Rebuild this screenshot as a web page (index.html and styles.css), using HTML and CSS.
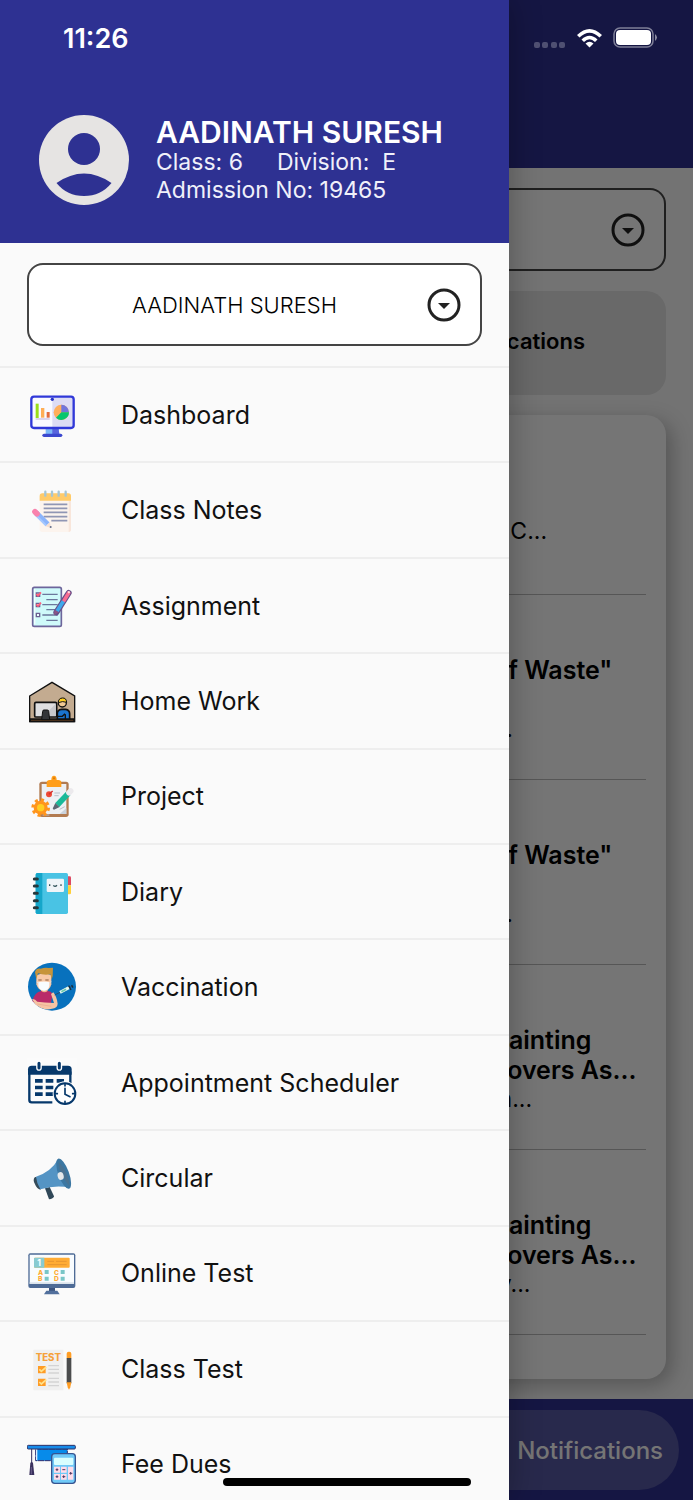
FILE: index.html
```html
<!DOCTYPE html>
<html lang="en">
<head>
<meta charset="utf-8">
<meta name="viewport" content="width=device-width, initial-scale=1">
<title>Student App</title>
<link rel="stylesheet" href="styles.css">
</head>
<body>
<div class="statusbar">
	<span class="clock">11:26</span>
	<div class="indicators">
		<svg class="signal" viewBox="0 0 32 6"><rect width="6" height="6" rx="2"/><rect x="8" width="6" height="6" rx="2"/><rect x="17" width="6" height="6" rx="2"/><rect x="25" width="6" height="6" rx="2"/></svg>
		<svg class="wifi" viewBox="0 0 27 20"><path d="M1 7Q13.500-5 26 7L23.500 9.500Q13.500 0 3.500 9.500ZM5.500 11.500Q13.500 4 21.500 11.500L19 14Q13.500 8.500 8 14ZM9.500 15.500Q13.500 12 17.500 15.500L13.500 19.500Z"/></svg>
		<svg class="battery" viewBox="0 0 45 22"><rect x="1" y="1" width="39" height="19" rx="6" fill="none" stroke="#fff" stroke-opacity=".45" stroke-width="1.500"/><rect x="3" y="3" width="35" height="15" rx="4" fill="#fff"/><path d="M42 7q4 3.500 0 7z" fill="#fff" fill-opacity=".5"/></svg>
	</div>
</div>

<nav class="drawer">
	<header class="profile">
		<svg class="avatar" viewBox="0 0 90 90"><circle cx="45" cy="45" r="45" fill="#e6e4e3"/><circle cx="45" cy="34" r="16" fill="#2e3192"/><path d="M17.500 68Q45 49 72.500 68Q62 81 45 81T17.500 68Z" fill="#2e3192"/></svg>
		<div>
			<h1>AADINATH SURESH</h1>
			<p class="class"><span>Class: 6</span><span>Division:&nbsp; E</span></p>
			<p>Admission No: 19465</p>
		</div>
	</header>
	<div class="picker">
		<select aria-label="Student"><option>AADINATH SURESH</option></select>
		<svg class="arrow" viewBox="0 0 34 34"><circle cx="17" cy="17" r="15"/><path d="M11 15h12l-6 6z"/></svg>
	</div>
	<ul class="menu">
		<li><a href="#dashboard">
			<svg viewBox="0 0 150 150"><path d="M56 115h40v20H56z" fill="#7cb8f8"/><path d="M76 115h18l4 20H76z" fill="#5964dc"/><rect x="46" y="131" width="60" height="10" rx="5" fill="#3b48cf"/><rect x="13" y="20" width="127" height="94" rx="6" fill="#fafaff"/><path d="M76 20h64v94H76z" fill="#dddcf4"/><rect x="13" y="20" width="127" height="94" rx="8" fill="none" stroke="#3038d8" stroke-width="7"/><circle cx="76" cy="28" r="5" fill="#2330c4"/><path d="M26 41h9v43h-9z" fill="#9bdd19"/><path d="M42 54h10v29H42z" fill="#ffae57"/><path d="M59 66h9v17h-9z" fill="#e36c3d"/><path d="M26 84h42v6H26z" fill="#dcd5ed"/><circle cx="103" cy="67" r="23" fill="#ffae5b"/><path d="M103 67V44a23 23 0 0 1 23 23z" fill="#7176dc"/><path d="M103 67h23a23 23 0 0 1-39 16z" fill="#05c66e"/></svg>
			Dashboard</a></li>
		<li><a href="#class-notes">
			<svg viewBox="0 0 150 150"><rect x="38" y="25" width="94" height="116" rx="8" fill="#fcf4ee"/><path d="M125 47h7v86q0 8-7 8z" fill="#f8e6db"/><path d="M38 47V33q0-8 8-8h78q8 0 8 8v14z" fill="#ffcb69"/><path d="M55 20v12M75 20v12M95 20v12M116 20v12" stroke="#a6c6d4" stroke-width="7" stroke-linecap="round"/><path d="M50 58h71M50 70h71M50 82h71M50 95h71M73 107h48" stroke="#9096b4" stroke-width="5"/><path d="M26 82l36 36" stroke="#8bb4fb" stroke-width="16"/><path d="M22 86l36 36" stroke="#a5c8ff" stroke-width="6"/><path d="M24 80l6 6" stroke="#f982ad" stroke-width="17" stroke-linecap="round"/><path d="M68 112l5 17-17-5z" fill="#f6dfd0"/><circle cx="71" cy="126" r="3" fill="#65718e"/></svg>
			Class Notes</a></li>
		<li><a href="#assignment">
			<svg viewBox="0 0 150 150"><rect x="17" y="19" width="86" height="117" rx="5" fill="#cffafa" stroke="#6d659b" stroke-width="5"/><path d="M23 24v106" stroke="#f1ffff" stroke-width="4"/><path d="M46 40h46M58 56h34M46 71h46M58 86h34M46 102h46M58 118h34" stroke="#6b779c" stroke-width="4"/><path d="M28 36h10v10H28zM28 67h10v10H28zM28 97h10v10H28z" fill="#e9ffff" stroke="#6b5e91" stroke-width="4"/><path d="M28 39l5 5 9-10M28 70l5 5 9-10" fill="none" stroke="#ff5d7b" stroke-width="5"/><path d="M125 36L88 94" stroke="#654f88" stroke-width="18" stroke-linecap="round"/><path d="M125 36l-14 23" stroke="#f96c91" stroke-width="11" stroke-linecap="round"/><path d="M109 61L90 91" stroke="#3ea9ec" stroke-width="11"/><path d="M83 86l12 8-14 9z" fill="#8a5585"/><path d="M123 35l5-3" stroke="#ffdce1" stroke-width="6"/></svg>
			Assignment</a></li>
		<li><a href="#home-work">
			<svg viewBox="0 0 150 150"><path d="M8 60L75 19l68 41v77H8z" fill="#c3ab90" stroke="#111" stroke-width="4"/><path d="M10 129h131v8H10z" fill="#49301b" stroke="#111" stroke-width="4"/><rect x="23" y="79" width="66" height="44" rx="4" fill="#dfdfe1" stroke="#111" stroke-width="5"/><path d="M86 83v37H50z" fill="#c8c8cb"/><path d="M47 106q0-4 4-4h10q4 0 4 4l3 25H44z" fill="#333538" stroke="#111" stroke-width="3"/><circle cx="106" cy="81" r="12" fill="#f1c994" stroke="#111" stroke-width="4"/><path d="M94 80q0-13 12-14t13 13q-12-5-25 1z" fill="#ffcf21" stroke="#111" stroke-width="3"/><path d="M91 129v-17q0-11 13-12h12q12 2 12 13v16z" fill="#1a74cf" stroke="#111" stroke-width="5"/><path d="M88 121h18l8-8M115 129v-14" fill="none" stroke="#111" stroke-width="4"/></svg>
			Home Work</a></li>
		<li><a href="#project">
			<svg viewBox="0 0 150 150"><rect x="37" y="32" width="88" height="106" rx="8" fill="#b27b51"/><path d="M44 39h74v90H44z" fill="#edf0f4"/><path d="M118 111v18h-20z" fill="#cbd2db"/><path d="M59 48V35q0-7 9-8h5q0-13 8-13t8 13h5q9 1 9 8v13z" fill="#ff9e1b"/><circle cx="81" cy="22" r="3" fill="#d97a09"/><circle cx="66" cy="70" r="9" fill="#ed4935"/><path d="M66 70l11-10" stroke="#d52e2d" stroke-width="4"/><path d="M82 66h17M82 74h13M47 132h20M98 115l15-8" stroke="#b9bec8" stroke-width="3"/><path d="M91 102l33-35" stroke="#19b999" stroke-width="17"/><path d="M126 65l5-5" stroke="#eceaed" stroke-width="17" stroke-linecap="round"/><path d="M85 96l13 12-17 8q-6-2-2-7z" fill="#5c6673"/><circle cx="41" cy="110" r="23" fill="none" stroke="#ff951d" stroke-width="10" stroke-dasharray="9 9.060"/><circle cx="41" cy="110" r="21" fill="#ff951d"/><circle cx="41" cy="110" r="11" fill="#ffce22"/></svg>
			Project</a></li>
		<li><a href="#diary">
			<svg viewBox="0 0 150 150"><path d="M121 28h7q4 0 4 4v23h-11z" fill="#dc4962"/><path d="M121 55h11v23q0 4-4 4h-7z" fill="#ffcf38"/><rect x="26" y="18" width="97" height="123" rx="5" fill="#49c3e4"/><path d="M46 18H31q-5 0-5 5v113q0 5 5 5h15z" fill="#15a6ca"/><path d="M22 36h9M22 57h9M22 79h9M22 101h9M22 122h9" stroke="#26383c" stroke-width="9" stroke-linecap="round"/><rect x="59" y="35" width="52" height="40" rx="4" fill="#eff4f8"/><path d="M68 52v5M102 52v5M79 55q5 6 11 0" fill="none" stroke="#35555d" stroke-width="4"/></svg>
			Diary</a></li>
		<li><a href="#vaccination">
			<svg viewBox="0 0 150 150"><circle cx="75" cy="74" r="72" fill="#0871bd"/><path d="M42 78h20v20H42z" fill="#eeb28e"/><path d="M28 40q22-11 45-1v28q-5 20-22 20T28 67z" fill="#f8c9a8"/><path d="M28 52l-4-22q4-12 17-10 14-5 24-2l13-1-1 25-3 10-4-15q-20 3-37-3z" fill="#c6943b"/><path d="M34 61q17-5 33 0v11q-3 14-16 14T34 72z" fill="#f8fcff"/><path d="M34 63l-5-3M67 62l6-3" stroke="#d9edf6" stroke-width="2"/><path d="M34 54h10M55 54h10" stroke="#885b3b" stroke-width="3"/><path d="M16 117q6-26 27-30 9 8 19 0 10 0 15 9l-4 20-2 15-40-1z" fill="#b92b69"/><path d="M72 96l7-5q10 12 13 34-1 14-17 15-26 8-50-13l-10-16q8-2 16 8 20 3 50 4z" fill="#f6c4a4"/><path d="M31 126l42 7" stroke="#e8a78b" stroke-width="2"/><path d="M83 99l52-26" stroke="#303c4b" stroke-width="2"/><path d="M99 91l27-14" stroke="#e8f8ee" stroke-width="9"/><path d="M103 89l14-7" stroke="#6ac7ad" stroke-width="5"/><path d="M125 71l7 13M134 69l4 8" stroke="#192d3a" stroke-width="4"/></svg>
			Vaccination</a></li>
		<li><a href="#appointment">
			<svg viewBox="0 0 150 150"><path d="M0 0h150v150H0z" fill="#fff" fill-opacity=".3"/><path d="M7 44h123v57M76 133H14q-7 0-7-7V44" fill="none" stroke="#06386b" stroke-width="7"/><path d="M3 50V34q0-11 11-11h109q11 0 11 11v16z" fill="#06386b"/><path d="M36 16v14M97 16v14" stroke="#fff" stroke-width="17" stroke-linecap="round"/><path d="M36 16v14M97 16v14" stroke="#06386b" stroke-width="9" stroke-linecap="round"/><path d="M24 63h23v11H24zM56 63h23v11H56zM89 63h22v11H89zM24 83h23v11H24zM56 83h23v11H56zM24 103h23v11H24zM56 103h23v11H56z" fill="#06386b"/><circle cx="114" cy="107" r="37" fill="#fff"/><circle cx="114" cy="107" r="31" fill="#fff" stroke="#06386b" stroke-width="6"/><path d="M114 91v18l15 7M114 77v7M114 130v7M84 107h7M137 107h7" fill="none" stroke="#06386b" stroke-width="5" stroke-linecap="round"/></svg>
			Appointment Scheduler</a></li>
		<li><a href="#circular">
			<svg viewBox="0 0 150 150"><path d="M54 106l14-4 13 28q-2 8-15 9z" fill="#304858"/><path d="M24 72q-8 8 0 22 6 15 16 16l6-8-13-29z" fill="#344b59"/><path d="M27 71Q74 55 94 17l36 88q-41-10-90 4-11-18-13-38z" fill="#5494c4"/><ellipse cx="110" cy="62" rx="16" ry="48" transform="rotate(-20 110 62)" fill="#3c77a2"/><path d="M95 26q31 34 33 75l-16-22-15-31z" fill="#4a7291"/><ellipse cx="101" cy="69" rx="9" ry="12" transform="rotate(-15 101 69)" fill="#e5e8ea"/></svg>
			Circular</a></li>
		<li><a href="#online-test">
			<svg viewBox="0 0 150 150"><path d="M66 119h18v12H66z" fill="#3b547f"/><path d="M58 128h33l7 11H51z" fill="#516f9c"/><rect x="4" y="16" width="141" height="104" rx="6" fill="#4e6b96"/><path d="M8 20h133v87H8z" fill="#f8fcff"/><path d="M8 103h133v5H8z" fill="#dbe4ec"/><rect x="21" y="29" width="107" height="30" rx="3" fill="#ffac35"/><path d="M52 29H24q-3 0-3 3v24q0 3 3 3h28z" fill="#88cbd1"/><path d="M61 40h20M87 40h32M61 50h58" stroke="#e79631" stroke-width="3"/><text class="slide-number" x="31" y="53">1</text><g class="answers"><text x="33" y="80">A</text><text x="33" y="99">B</text><text x="81" y="80">C</text><text x="81" y="99">D</text></g><path d="M53 66h12v12H53zM53 86h12v12H53zM101 66h12v12h-12zM101 86h12v12h-12z" fill="#79c6c8"/></svg>
			Online Test</a></li>
		<li><a href="#class-test">
			<svg viewBox="0 0 150 150"><path d="M19 17h90v122H19z" fill="#f0f0f0"/><text class="test-label" x="26" y="52">TEST</text><path d="M33 66h23v22H33zM33 104h23v22H33z" fill="#ff9c25"/><path d="M37 76l6 6 15-13M37 114l6 6 15-13" fill="none" stroke="#ffe18a" stroke-width="5"/><path d="M64 65h32M64 76h32M64 87h32M64 103h32M64 114h32M64 125h32" stroke="#d3d3d4" stroke-width="4"/><rect x="119" y="23" width="14" height="24" rx="6" fill="#ff9d24"/><path d="M119 42h14v76h-14z" fill="#4b4c4d"/><path d="M119 115h14l-3 15-4 7-4-7z" fill="#ff9d24"/></svg>
			Class Test</a></li>
		<li><a href="#fee-dues">
			<svg viewBox="0 0 150 150"><path d="M26 30h95v35H26z" fill="#078bea" stroke="#312f70" stroke-width="3" stroke-dasharray="18 2"/><path d="M27 30h4v33h-4z" fill="#d7edff"/><rect x="1" y="19" width="144" height="11" rx="3" fill="#168bea" stroke="#303064" stroke-width="3"/><path d="M14 30v46" stroke="#34305f" stroke-width="3"/><path d="M10 72q4-6 8 0l4 36H7z" fill="#3a315d"/><path d="M13 84v22" stroke="#8374a1" stroke-width="2"/><rect x="74" y="44" width="71" height="89" rx="9" fill="#70caf8" stroke="#365491" stroke-width="4"/><rect x="81" y="56" width="58" height="22" rx="3" fill="#d9ffff"/><path d="M81 83h18v18H81zM102 83h17v18h-17zM123 83h16v39h-16zM81 105h18v17H81zM102 105h17v17h-17z" fill="#ffdce9"/><path d="M86 92h8M90 88v8M106 92h9M127 103h9M131 99v8M86 113h8M90 109v8M106 113h9M110 109v8" stroke="#4f3760" stroke-width="3"/></svg>
			Fee Dues</a></li>
	</ul>
</nav>

<main class="app">
	<div class="appbar"></div>
	<div class="content">
		<div class="picker">
			<select aria-label="Current student"><option></option></select>
			<svg class="arrow" viewBox="0 0 34 34"><circle cx="17" cy="17" r="15"/><path d="M11 15h12l-6 6z"/></svg>
		</div>
		<h2 class="heading">Notifications</h2>
		<div class="list">
			<article class="first"><p>NC...</p></article>
			<article><h3>of Waste"</h3><p>...</p></article>
			<article><h3>of Waste"</h3><p>...</p></article>
			<article><h3>Painting<br>Lovers As...</h3><p>in...</p></article>
			<article><h3>Painting<br>Lovers As...</h3><p>ly...</p></article>
		</div>
	</div>
	<footer class="tabbar"><a href="#notifications">Notifications</a></footer>
</main>
<div class="home-indicator"></div>
</body>
</html>
```
FILE: styles.css
```css
*{
	box-sizing:border-box;
}
html,body{
	padding:0;
	margin:0;
}
body{
	display:flex;
	position:relative;
	height:100vh;
	overflow:hidden;
	font-family:"Inter","Liberation Sans",sans-serif;
	font-size:25px;
	color:#111;
}
h1,h2,h3,p,ul{
	margin:0;
	padding:0;
}
a{
	color:inherit;
	text-decoration:none;
}

/* system bars, over everything */
.statusbar{
	position:absolute;
	z-index:3;
	top:0;
	left:0;
	width:100%;
	height:76px;
	padding:0 35px 0 63px;
	display:flex;
	align-items:center;
	justify-content:space-between;
	color:#fff;
}
.clock{
	font-size:27px;
	font-weight:600;
}
.indicators{
	display:flex;
	align-items:center;
	gap:10px;
}
.signal{
	width:32px;
	height:6px;
	margin-top:14px;
	fill:#fff;
	fill-opacity:.25;
}
.wifi{
	width:27px;
	height:20px;
	fill:#fff;
}
.battery{
	width:45px;
	height:22px;
}
.home-indicator{
	position:absolute;
	z-index:3;
	bottom:14px;
	left:50%;
	width:248px;
	height:8px;
	margin-left:-124px;
	border-radius:4px;
	background-color:#000;
}

/* drawer */
.drawer{
	position:relative;
	z-index:2;
	flex:0 0 509px;
	overflow:hidden;
	background-color:#fafafa;
	box-shadow:0 0 30px rgba(0,0,0,0.3);
}
.profile{
	display:flex;
	align-items:center;
	gap:27px;
	height:243px;
	padding:76px 20px 0 39px;
	background-color:#2e3192;
	color:#fff;
}
.avatar{
	width:90px;
	height:90px;
}
.profile h1{
	font-size:30px;
	font-weight:600;
	line-height:32px;
	white-space:nowrap;
}
.profile p{
	font-size:23px;
	line-height:28px;
	color:#f0f0fa;
}
.class{
	display:flex;
	gap:34px;
}
.picker{
	display:grid;
	align-items:center;
	margin:20px 27px;
}
.picker select{
	grid-area:1/1;
	width:100%;
	height:83px;
	padding:0 67px 0 27px;
	appearance:none;
	border:2px solid #444;
	border-radius:16px;
	background-color:#fff;
	color:#000;
	font:inherit;
	font-size:22px;
	font-weight:300;
	text-align:center;
	text-align-last:center;
}
.arrow{
	grid-area:1/1;
	justify-self:end;
	width:34px;
	height:34px;
	margin-right:21px;
	fill:#222;
	pointer-events:none;
}
.arrow circle{
	fill:none;
	stroke:#222;
	stroke-width:3px;
}
.menu{
	display:grid;
	grid-auto-rows:1fr;
	min-height:1145px;
	list-style:none;
}
.menu li{
	border-top:2px solid #eee;
}
.menu a{
	display:flex;
	align-items:center;
	gap:44px;
	height:100%;
	padding-left:27px;
}
.menu svg{
	width:50px;
	height:50px;
}
.slide-number{
	font-size:26px;
	font-weight:700;
	fill:#fff;
}
.answers{
	font-size:20px;
	font-weight:800;
	fill:#ffac35;
}
.test-label{
	font-size:29px;
	font-weight:800;
	fill:#f5a13b;
}

/* page behind the drawer */
.app{
	position:relative;
	flex:1;
	display:flex;
	flex-direction:column;
	margin-left:-80px;
	background-color:#fafafa;
}
.app::after{
	content:"";
	position:absolute;
	top:0;
	right:0;
	bottom:0;
	left:0;
	background-color:rgba(0,0,0,0.54);
}
.appbar{
	flex:0 0 168px;
	background-color:#2e3192;
}
.content{
	flex:1;
	display:flex;
	flex-direction:column;
	gap:20px;
	padding:20px 27px 20px 0;
}
.content .picker{
	margin:0;
}
.content .picker select{
	border-left:none;
	border-radius:0 16px 16px 0;
}
.heading{
	height:104px;
	padding-right:81px;
	border-radius:0 20px 20px 0;
	background-color:#e4e4e4;
	color:#000;
	font-size:22px;
	font-weight:600;
	line-height:100px;
	text-align:right;
}
.list{
	flex:1;
	padding-right:20px;
	border-radius:0 20px 20px 0;
	background-color:#fff;
	box-shadow:6px 6px 20px rgba(0,0,0,0.25);
	color:#000;
}
.list article{
	height:185px;
	padding:60px 0 0 64px;
	border-bottom:1px solid #bbb;
}
.list .first{
	height:180px;
	padding-top:102px;
}
.list h3{
	min-height:60px;
	font-size:25px;
	font-weight:600;
	line-height:30px;
	white-space:nowrap;
}
.list p{
	font-size:23px;
	line-height:28px;
}
.tabbar{
	flex:0 0 101px;
	padding:11px 14px 10px 0;
	background-color:#2e3192;
}
.tabbar a{
	display:flex;
	align-items:center;
	justify-content:flex-end;
	height:80px;
	padding-right:16px;
	border-radius:0 40px 40px 0;
	background-color:#5859a5;
	color:#fff;
	font-size:24px;
	font-weight:500;
}
```
